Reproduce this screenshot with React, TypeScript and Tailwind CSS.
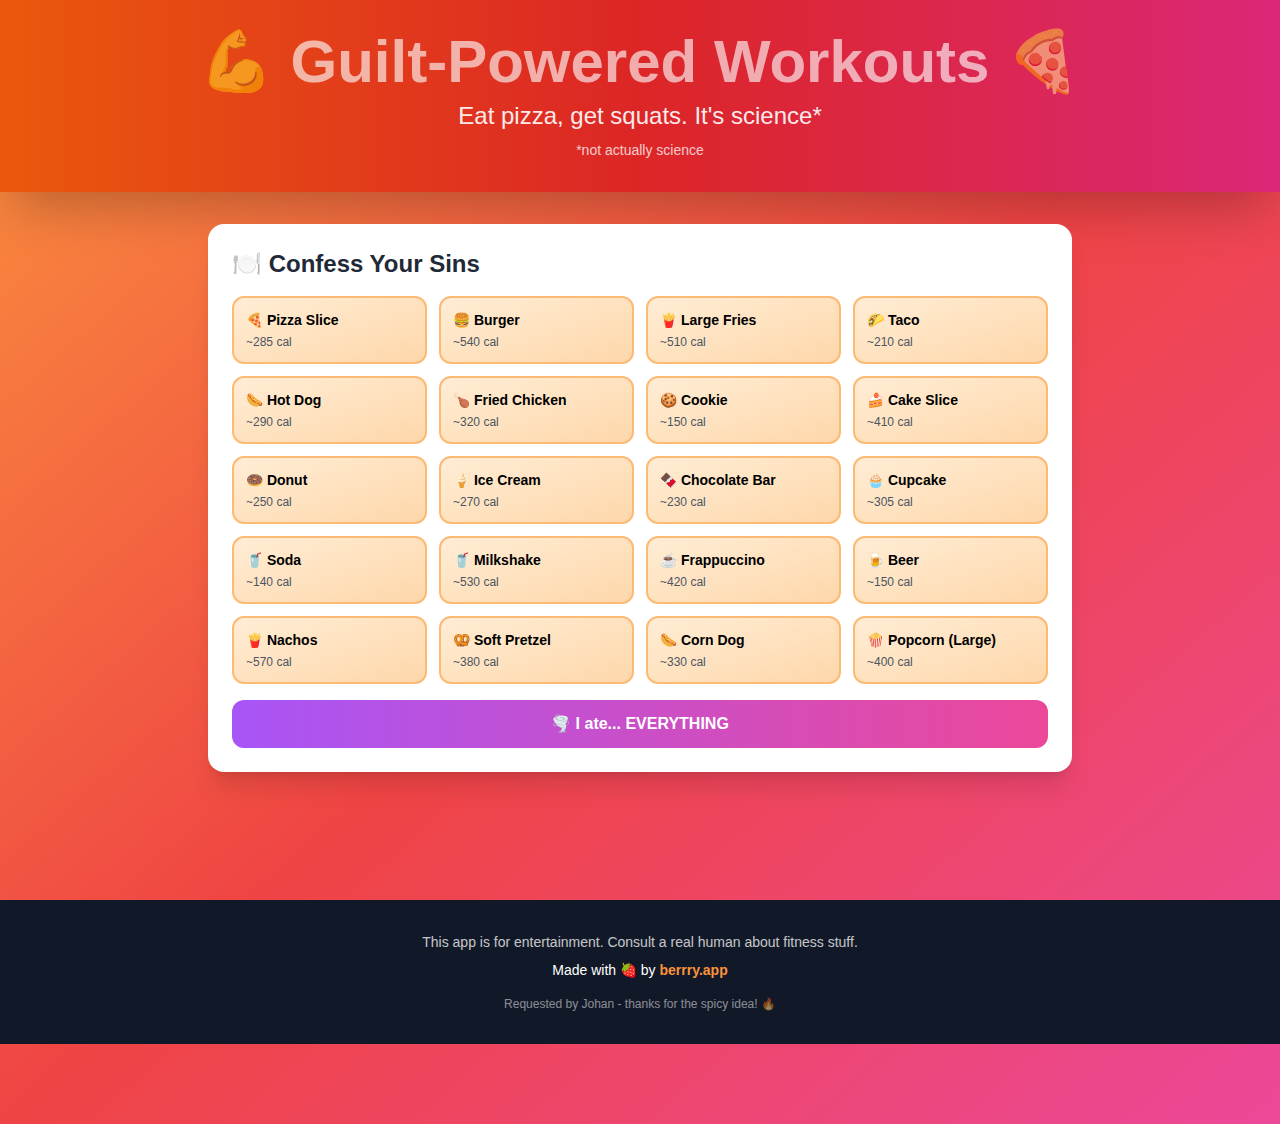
type Food = { emoji: string; name: string; calories: number };

const foods: Food[] = [
  { emoji: "🍕", name: "Pizza Slice", calories: 285 },
  { emoji: "🍔", name: "Burger", calories: 540 },
  { emoji: "🍟", name: "Large Fries", calories: 510 },
  { emoji: "🌮", name: "Taco", calories: 210 },
  { emoji: "🌭", name: "Hot Dog", calories: 290 },
  { emoji: "🍗", name: "Fried Chicken", calories: 320 },
  { emoji: "🍪", name: "Cookie", calories: 150 },
  { emoji: "🍰", name: "Cake Slice", calories: 410 },
  { emoji: "🍩", name: "Donut", calories: 250 },
  { emoji: "🍦", name: "Ice Cream", calories: 270 },
  { emoji: "🍫", name: "Chocolate Bar", calories: 230 },
  { emoji: "🧁", name: "Cupcake", calories: 305 },
  { emoji: "🥤", name: "Soda", calories: 140 },
  { emoji: "🥤", name: "Milkshake", calories: 530 },
  { emoji: "☕", name: "Frappuccino", calories: 420 },
  { emoji: "🍺", name: "Beer", calories: 150 },
  { emoji: "🍟", name: "Nachos", calories: 570 },
  { emoji: "🥨", name: "Soft Pretzel", calories: 380 },
  { emoji: "🌭", name: "Corn Dog", calories: 330 },
  { emoji: "🍿", name: "Popcorn (Large)", calories: 400 },
];

function Header() {
  return (
    <header className="bg-linear-to-r/srgb from-[#ea580c] via-[#dc2626] to-[#db2777] px-4 py-8 text-center text-white shadow-2xl">
      <h1 className="mb-2 text-6xl font-bold opacity-62">💪 Guilt-Powered Workouts 🍕</h1>
      <p className="text-2xl opacity-90">Eat pizza, get squats. It's science*</p>
      <p className="mt-2 text-sm opacity-75">*not actually science</p>
    </header>
  );
}

function FoodButton({ food }: { food: Food }) {
  return (
    <button
      type="button"
      className="rounded-xl border-2 border-[#fdba74] bg-linear-to-br/srgb from-[#ffedd5] to-[#fed7aa] p-3 text-left hover:border-[#f97316]"
    >
      <span className="block text-sm font-bold text-black">{`${food.emoji} ${food.name}`}</span>
      <span className="mt-1 block text-xs text-[#4b5563]">~{food.calories} cal</span>
    </button>
  );
}

function ConfessionCard() {
  return (
    <section className="rounded-2xl bg-white p-6 shadow-xl">
      <h2 className="mb-4 text-2xl font-bold text-[#1f2937]">🍽️ Confess Your Sins</h2>
      <div className="grid grid-cols-2 gap-3 md:grid-cols-4">
        {foods.map((food) => (
          <FoodButton key={food.name} food={food} />
        ))}
      </div>
      <button
        type="button"
        className="mt-4 w-full rounded-xl bg-linear-to-r/srgb from-[#a855f7] to-[#ec4899] px-6 py-3 font-bold text-white"
      >
        🌪️ I ate... EVERYTHING
      </button>
    </section>
  );
}

function Footer() {
  return (
    <footer className="mt-24 bg-[#111827] px-4 py-8 text-center text-sm text-white">
      <p className="mb-2 opacity-75">This app is for entertainment. Consult a real human about fitness stuff.</p>
      <p>
        Made with 🍓 by{" "}
        <a href="https://berrry.app" className="font-bold text-[#fb923c] hover:underline">
          berrry.app
        </a>
      </p>
      <p className="mt-4 text-xs opacity-50">Requested by Johan - thanks for the spicy idea! 🔥</p>
    </footer>
  );
}

export default function App() {
  return (
    <div className="min-h-screen bg-linear-to-br/srgb from-[#fb923c] via-[#ef4444] to-[#ec4899] font-['Liberation_Sans',Arial,sans-serif]">
      <Header />
      <main className="mx-auto max-w-4xl px-4 py-8">
        <ConfessionCard />
      </main>
      <Footer />
    </div>
  );
}
